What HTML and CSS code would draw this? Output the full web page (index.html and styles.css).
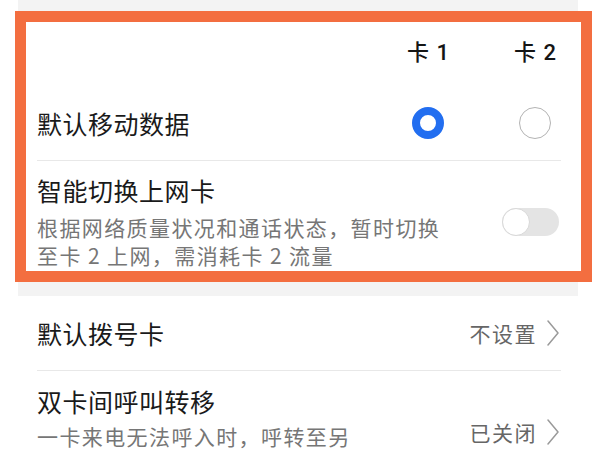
FILE: index.html
```html
<!DOCTYPE html>
<html lang="zh-CN">
<head>
<meta charset="utf-8">
<link rel="stylesheet" href="styles.css">
</head>
<body>
  <div class="band">
    <section class="card">
      <div class="grid head">
        <span></span>
        <span class="col">卡 1</span>
        <span class="col">卡 2</span>
      </div>
      <div class="grid data-row">
        <span class="title">默认移动数据</span>
        <span class="col"><span class="radio on"></span></span>
        <span class="col"><span class="radio"></span></span>
      </div>
      <div class="switch-row">
        <div class="text card-text">
          <div class="title">智能切换上网卡</div>
          <div class="desc">根据网络质量状况和通话状态，暂时切换至卡 2 上网，需消耗卡 2 流量</div>
        </div>
        <span class="switch"><span class="knob"></span></span>
      </div>
      <div class="highlight"></div>
    </section>
  </div>
  <section class="list">
    <div class="item single">
      <span class="title">默认拨号卡</span>
      <span class="value">不设置<svg class="chev" viewBox="0 0 12 26" width="12" height="26"><polyline points="1,1 11,13 1,25" fill="none" stroke="#9a9a9a" stroke-width="1.5" stroke-linejoin="round" stroke-linecap="round"/></svg></span>
    </div>
    <div class="item double">
      <div class="text list-text">
        <div class="title">双卡间呼叫转移</div>
        <div class="desc">一卡来电无法呼入时，呼转至另一张卡</div>
      </div>
      <span class="value">已关闭<svg class="chev" viewBox="0 0 12 26" width="12" height="26"><polyline points="1,1 11,13 1,25" fill="none" stroke="#9a9a9a" stroke-width="1.5" stroke-linejoin="round" stroke-linecap="round"/></svg></span>
    </div>
  </section>
</body>
</html>
```

FILE: styles.css
```css
* { box-sizing: border-box; }

html, body {
  margin: 0;
  padding: 0;
  background: #ffffff;
  font-family: "Noto Sans CJK SC", "Noto Sans", sans-serif;
  color: #1a1a1a;
}

body {
  width: 600px;
  height: 450px;
  overflow: hidden;
}

.band {
  margin: 0 22px 0 18px;
  background: #f3f3f3;
  padding: 11px 0 14px;
}

.card {
  position: relative;
  background: #ffffff;
  padding: 28px 17px 13px 19px;
}

.grid {
  display: grid;
  grid-template-columns: 1fr 52px 52px;
  column-gap: 55px;
  align-items: center;
}

.col {
  display: flex;
  justify-content: center;
  align-items: center;
}

.head {
  height: 28px;
  line-height: 28px;
  font-family: "Roboto", "Noto Sans CJK SC", sans-serif;
  font-size: 22px;
  font-weight: 500;
  word-spacing: 2px;
  color: #151515;
}

.title {
  font-size: 25px;
  letter-spacing: 0.5px;
  line-height: 32px;
  color: #1a1a1a;
  white-space: nowrap;
}

.data-row {
  margin-top: 19px;
  height: 75px;
  border-bottom: 1px solid #e8e8e8;
}

.radio {
  display: block;
  width: 32px;
  height: 32px;
  border-radius: 50%;
  border: 1.5px solid #b3b3b3;
  background: #ffffff;
}

.radio.on {
  border: 8.5px solid #226ef0;
}

.switch-row {
  display: flex;
  align-items: center;
  justify-content: space-between;
  padding-top: 13px;
}

.desc {
  margin-top: 8px;
  font-size: 21px;
  letter-spacing: 1.4px;
  line-height: 28px;
  color: #767676;
}

.card-text { width: 412px; }
.card-text .desc { margin-top: 7px; }

.list-text { width: 326px; }
.list-text .desc { margin-top: 5px; }

.switch {
  position: relative;
  display: block;
  width: 57px;
  height: 28px;
  border-radius: 14px;
  background: #e4e4e4;
  margin-right: 2px;
}

.knob {
  position: absolute;
  left: 0;
  top: 0;
  width: 28px;
  height: 28px;
  border-radius: 50%;
  background: #ffffff;
  border: 1px solid #d8d8d8;
}

.highlight {
  position: absolute;
  left: -3px;
  top: 0;
  right: -14px;
  bottom: 0;
  border: 11px solid #f36e40;
  pointer-events: none;
}

.list {
  padding: 0 39px 0 37px;
}

.item {
  display: flex;
  align-items: center;
  justify-content: space-between;
}

.item.single {
  height: 75px;
  border-bottom: 1px solid #e8e8e8;
}

.item.double {
  padding: 14px 0 14px;
}

.value {
  display: flex;
  align-items: center;
  font-size: 21px;
  letter-spacing: 1.5px;
  color: #666666;
  white-space: nowrap;
}

.chev {
  display: block;
  margin-left: 10px;
  margin-right: 2px;
}
```
